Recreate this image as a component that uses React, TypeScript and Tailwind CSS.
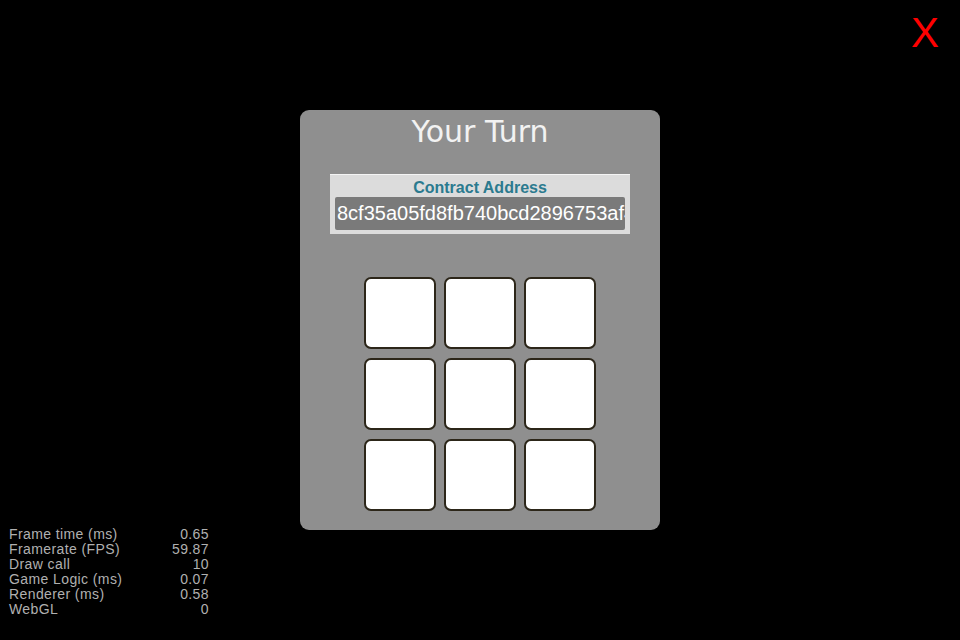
import React from 'react';

const stats = [
  ['Frame time (ms)', '0.65'],
  ['Framerate (FPS)', '59.87'],
  ['Draw call', '10'],
  ['Game Logic (ms)', '0.07'],
  ['Renderer (ms)', '0.58'],
  ['WebGL', '0'],
];

export default function App() {
  return (
    <div className="relative w-[960px] h-[640px] bg-black overflow-hidden flex items-center justify-center">
      <button className="absolute top-[12px] right-[21px] text-[#ff0000] text-[42px] leading-none font-['Liberation_Sans',sans-serif]">
        X
      </button>

      <div className="w-[360px] h-[420px] bg-[#8f8f8f] rounded-[9px] flex flex-col items-center">
        <h1 className="text-[30px] leading-[44px] text-[#f2f2f2] font-['DejaVu_Sans',sans-serif]">Your Turn</h1>

        <div className="mt-[20px] w-[300px] h-[60px] bg-[#dcdcdc] border-t border-[#f4f4f4] flex flex-col items-center px-[5px]">
          <div className="text-[16px] leading-[18px] font-bold text-[#2b7a8f] font-['Liberation_Sans',sans-serif] pt-[4px]">
            Contract Address
          </div>
          <div className="w-[290px] h-[33px] bg-[#7a7a7a] rounded-[2px] overflow-hidden whitespace-nowrap px-[2px] text-[20px] leading-[33px] text-white font-['Liberation_Sans',sans-serif]">
            8cf35a05fd8fb740bcd2896753af4c1e09b2
          </div>
        </div>

        <div className="mt-[43px] grid grid-cols-3 gap-x-[8px] gap-y-[9px]">
          {Array.from({ length: 9 }).map((_, i) => (
            <div key={i} className="w-[72px] h-[72px] bg-white border-[2.5px] border-[#2c2619] rounded-[7px]" />
          ))}
        </div>
      </div>

      <div className="absolute left-[9px] bottom-[23px] w-[200px] text-[#b0b0b0] text-[14px] leading-[15px] tracking-[0.4px] font-['Liberation_Sans',sans-serif]">
        {stats.map(([label, val]) => (
          <div key={label} className="flex justify-between">
            <span>{label}</span>
            <span>{val}</span>
          </div>
        ))}
      </div>
    </div>
  );
}
